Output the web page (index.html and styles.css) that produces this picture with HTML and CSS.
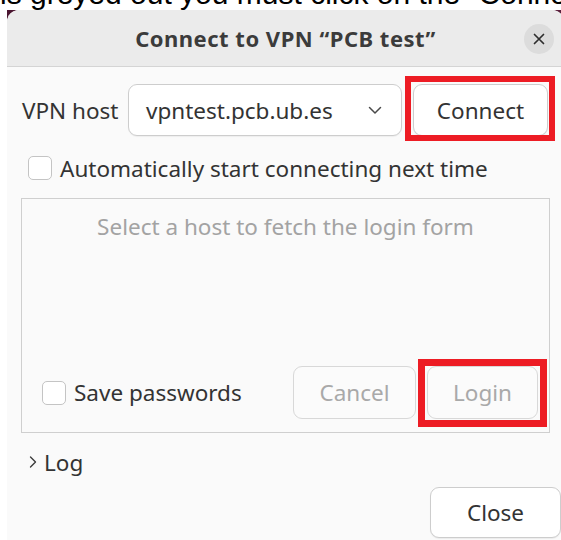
FILE: index.html
```html
<!DOCTYPE html>
<html lang="en">
<head>
<meta charset="utf-8">
<title>Connect to VPN</title>
<link rel="stylesheet" href="styles.css">
</head>
<body>
  <div class="caption"><p>is greyed out you must click on the “Connect” button to continue</p></div>

  <div class="desktop">
    <div class="dialog">
      <header class="titlebar">
        <h1 class="title">Connect to VPN “PCB test”</h1>
        <button class="win-close" aria-label="Close window">
          <svg width="12" height="12" viewBox="0 0 12 12"><path d="M1.5 1.5l9 9M10.5 1.5l-9 9" stroke="#2e2e2e" stroke-width="1.7" stroke-linecap="round"/></svg>
        </button>
      </header>

      <div class="content">
        <div class="host-row">
          <span class="host-label">VPN host</span>
          <div class="combo">
            <span class="combo-value">vpntest.pcb.ub.es</span>
            <svg class="combo-arrow" width="16" height="10" viewBox="0 0 16 10"><path d="M2.5 2.5l5.5 5.5 5.5-5.5" fill="none" stroke="#4a4a4a" stroke-width="1.5" stroke-linecap="round" stroke-linejoin="round"/></svg>
          </div>
          <span class="mark mark-connect"><button class="btn btn-connect">Connect</button></span>
        </div>

        <label class="check-row auto-row"><span class="check"></span>Automatically start connecting next time</label>

        <div class="login-frame">
          <p class="placeholder">Select a host to fetch the login form</p>
          <div class="frame-actions">
            <label class="check-row"><span class="check"></span>Save passwords</label>
            <button class="btn btn-cancel" disabled>Cancel</button>
            <span class="mark mark-login"><button class="btn btn-login" disabled>Login</button></span>
          </div>
        </div>

        <div class="expander">
          <svg width="8" height="14" viewBox="0 0 8 14"><path d="M1.5 2l5 5-5 5" fill="none" stroke="#3c3c3c" stroke-width="1.4" stroke-linecap="round" stroke-linejoin="round"/></svg>
          <span>Log</span>
        </div>

        <div class="dialog-actions">
          <button class="btn btn-close">Close</button>
        </div>
      </div>
    </div>
  </div>
</body>
</html>
```

FILE: styles.css
```css
* { box-sizing: border-box; }

html, body {
  margin: 0;
  width: 561px;
  height: 540px;
  overflow: hidden;
  background: #ffffff;
}

/* Sentence of document text peeking above the dialog */
.caption {
  height: 10px;
  overflow: hidden;
}
.caption p {
  margin: -23px 0 0 0;
  font-family: "Liberation Sans", Arial, sans-serif;
  font-size: 30px;
  line-height: 34px;
  color: #000;
  white-space: nowrap;
}

/* Desktop showing behind the rounded window corners */
.desktop {
  margin-left: 7px;
  height: 530px;
  background: linear-gradient(135deg, #4a1530 0%, #6b2a48 100%);
}

.dialog {
  width: 557px;
  height: 100%;
  background: #fafafa;
  border-radius: 12px 12px 0 0;
  overflow: hidden;
  font-family: "Noto Sans", "Open Sans", sans-serif;
  color: #333333;
}

.titlebar {
  position: relative;
  height: 57px;
  background: #ebebeb;
  border-bottom: 1px solid #d4d4d4;
  display: flex;
  align-items: center;
  justify-content: center;
}
.title {
  margin: 0;
  font-size: 22px;
  font-weight: 700;
  letter-spacing: 0.5px;
  color: #3b3b3b;
}
.win-close {
  position: absolute;
  right: 10px;
  top: 14px;
  width: 30px;
  height: 30px;
  border: 0;
  border-radius: 50%;
  background: #dcdcdc;
  display: flex;
  align-items: center;
  justify-content: center;
  padding: 0;
}

.content {
  padding: 17px 14px 0 14px;
  font-size: 22.5px;
}

/* Host selection row */
.host-row {
  height: 52px;
  display: flex;
  align-items: center;
}
.host-label {
  padding-left: 1px;
  width: 107px;
  white-space: nowrap;
}
.combo {
  width: 274px;
  height: 52px;
  background: #fff;
  border: 1px solid #cdcdcd;
  border-radius: 9px;
  display: flex;
  align-items: center;
  padding: 0 18px 0 17px;
  box-shadow: 0 1px 1px rgba(0,0,0,0.05);
}
.combo-value { flex: 1; white-space: nowrap; }

.btn {
  font-family: inherit;
  font-size: 22.5px;
  color: #333333;
  background: #fff;
  border: 1px solid #cdcdcd;
  border-radius: 9px;
  box-shadow: 0 1px 1px rgba(0,0,0,0.06);
  padding: 0;
  height: 52px;
}
.btn:disabled {
  color: #a9a9a9;
  background: #fbfbfb;
  border-color: #d8d8d8;
  box-shadow: none;
}
.btn-connect { width: 135px; }

/* Red annotation frames drawn over the buttons */
.mark {
  position: relative;
  display: inline-flex;
}
.mark::after {
  content: "";
  position: absolute;
  border: 6px solid #ed1c24;
  pointer-events: none;
}
.mark-connect { margin-left: 11px; }
.mark-connect::after { left: -8px; right: -7px; top: -8px; bottom: -5px; }
.mark-login { margin-left: 11px; }
.mark-login::after { left: -9px; right: -9px; top: -7px; bottom: -8px; border-width: 7px; }

/* Checkboxes */
.check-row {
  display: flex;
  align-items: center;
  height: 24px;
  gap: 8px;
  white-space: nowrap;
}
.check {
  width: 24px;
  height: 24px;
  border: 1px solid #c4c4c4;
  border-radius: 5px;
  background: #fff;
  flex: none;
}
.auto-row {
  margin-top: 20px;
  padding-left: 7px;
}

/* Login form area */
.login-frame {
  margin-top: 18px;
  height: 235px;
  border: 1px solid #cfcfcf;
  display: flex;
  flex-direction: column;
  padding-bottom: 13px;
}
.placeholder {
  margin: 15px 0 0 0;
  text-align: center;
  line-height: 26px;
  color: #a3a3a3;
  white-space: nowrap;
}
.frame-actions {
  margin-top: auto;
  display: flex;
  align-items: center;
  padding: 0 11px 0 20px;
}
.btn-cancel {
  margin-left: auto;
  width: 123px;
  height: 53px;
}
.btn-login {
  width: 111px;
  height: 53px;
}

.expander {
  margin-top: 17px;
  height: 24px;
  display: flex;
  align-items: center;
  gap: 7px;
  padding-left: 8px;
}

.dialog-actions {
  margin-top: 13px;
  margin-right: -11px;
  display: flex;
  justify-content: flex-end;
}
.btn-close {
  width: 131px;
  height: 51px;
}
```
